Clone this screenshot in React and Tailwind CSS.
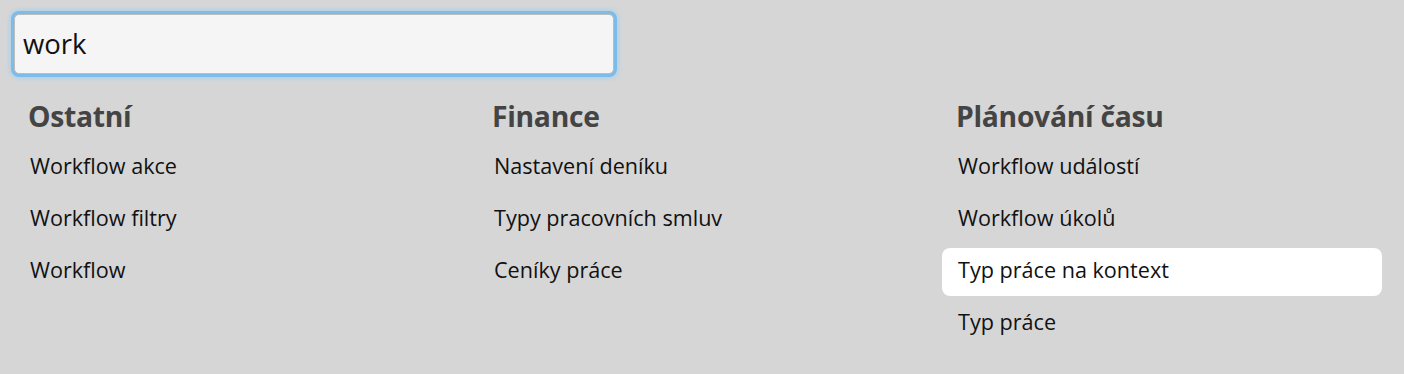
import React from "react";

const cols = [
  { title: "Ostatní", items: ["Workflow akce", "Workflow filtry", "Workflow"] },
  { title: "Finance", items: ["Nastavení deníku", "Typy pracovních smluv", "Ceníky práce"] },
  { title: "Plánování času", items: ["Workflow událostí", "Workflow úkolů", "Typ práce na kontext", "Typ práce"] },
];

export default function App() {
  return (
    <div className="w-[1404px] h-[374px] bg-[#d6d6d6] px-[14px] pt-[14px]" style={{ fontFamily: '"Open Sans", "Noto Sans", sans-serif' }}>
      <div className="w-[600px] h-[60px] rounded-[5px] border border-[#bcbcbc] bg-[#f5f5f5] shadow-[0_0_0_3px_#7dbbe9,0_0_5px_4px_#a6d0ef] flex items-center px-[8px]">
        <span className="text-[27.5px] text-[#111] leading-none">work</span>
      </div>
      <div className="flex gap-[24px] mt-[18px]">
        {cols.map((c) => (
          <div key={c.title} className="w-[440px] flex flex-col">
            <div className="h-[48px] flex items-center px-[14px] text-[28.3px] font-bold text-[#444] tracking-[-0.3px]">{c.title}</div>
            <div className="flex flex-col gap-[4px] mt-[4px]">
              {c.items.map((it) => (
                <div key={it} className={`h-[48px] flex items-center px-[16px] pb-[4px] rounded-[8px] text-[21.6px] text-[#111] ${it === "Typ práce na kontext" ? "bg-white" : ""}`}>{it}</div>
              ))}
            </div>
          </div>
        ))}
      </div>
    </div>
  );
}
